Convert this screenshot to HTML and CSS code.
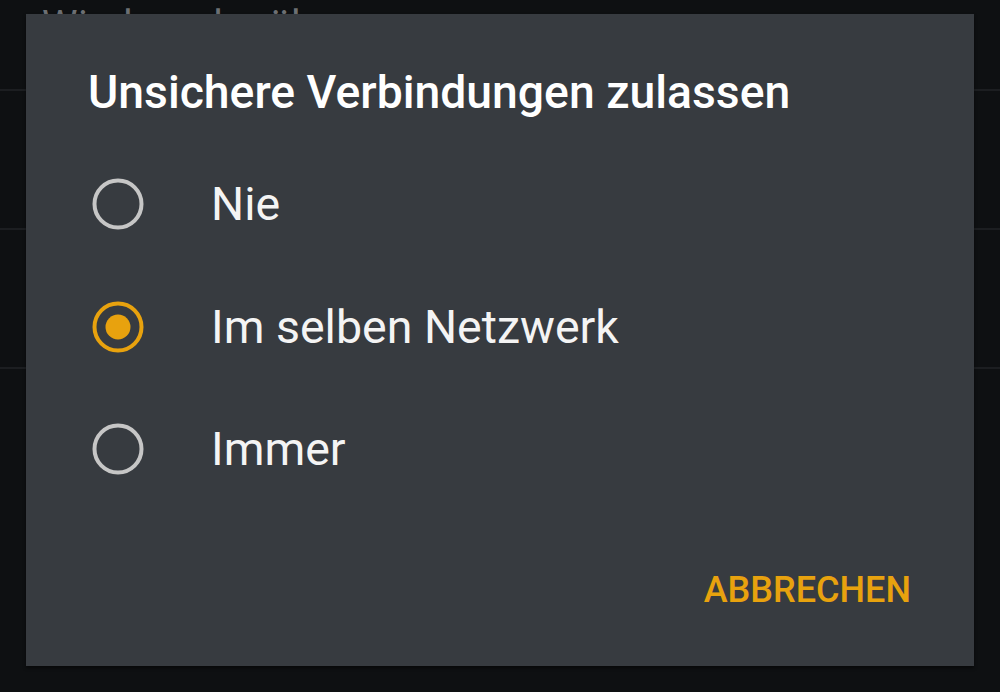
FILE: index.html
```html
<!DOCTYPE html>
<html lang="de">
<head>
<meta charset="utf-8">
<title>Unsichere Verbindungen zulassen</title>
<link rel="stylesheet" href="styles.css">
</head>
<body>
<div class="screen">
  <div class="bg-list">
    <div class="bg-row bg-row-first"><span class="bg-text">Wiedergabe über</span></div>
    <div class="bg-row"></div>
    <div class="bg-row"></div>
    <div class="bg-row bg-row-last"></div>
  </div>

  <div class="dialog" role="dialog">
    <h1 class="dialog-title">Unsichere Verbindungen zulassen</h1>
    <div class="options">
      <div class="option">
        <svg class="radio" viewBox="0 0 52 52" width="52" height="52"><circle cx="26" cy="26" r="23.5" fill="none" stroke="#c6c6c6" stroke-width="4"/></svg>
        <span class="option-label">Nie</span>
      </div>
      <div class="option">
        <svg class="radio" viewBox="0 0 52 52" width="52" height="52"><circle cx="26" cy="26" r="23.5" fill="none" stroke="#e8a20e" stroke-width="4"/><circle cx="26" cy="26" r="12.5" fill="#e8a20e"/></svg>
        <span class="option-label">Im selben Netzwerk</span>
      </div>
      <div class="option">
        <svg class="radio" viewBox="0 0 52 52" width="52" height="52"><circle cx="26" cy="26" r="23.5" fill="none" stroke="#c6c6c6" stroke-width="4"/></svg>
        <span class="option-label">Immer</span>
      </div>
    </div>
    <div class="actions">
      <button class="btn-text">ABBRECHEN</button>
    </div>
  </div>
</div>
</body>
</html>
```

FILE: styles.css
```css
* { box-sizing: border-box; }

html, body {
  margin: 0;
  padding: 0;
  background: #0e1012;
  font-family: Roboto, "Noto Sans", "Liberation Sans", sans-serif;
}

.screen {
  position: relative;
  width: 1000px;
  height: 692px;
  overflow: hidden;
  background: #0e1012;
}

.bg-list {
  display: flex;
  flex-direction: column;
}

.bg-row {
  height: 139px;
  border-bottom: 2px solid #1c1e21;
}

.bg-row-first {
  height: 91px;
  padding: 2px 0 0 42px;
}

.bg-row-last {
  border-bottom: none;
}

.bg-text {
  color: #6d7074;
  font-size: 40px;
  line-height: 48px;
  letter-spacing: 0.5px;
}

.dialog {
  position: absolute;
  left: 26px;
  top: 14px;
  width: 948px;
  height: 652px;
  background: #373b40;
  box-shadow: 0 2px 3px rgba(0,0,0,0.5);
  padding: 51px 63px 0 62px;
  display: flex;
  flex-direction: column;
}

.dialog-title {
  margin: 0;
  color: #ffffff;
  font-size: 46.3px;
  line-height: 54px;
  font-weight: 500;
}

.options {
  margin-top: 24px;
  display: flex;
  flex-direction: column;
}

.option {
  height: 122.5px;
  display: flex;
  align-items: center;
  padding-left: 4px;
  gap: 67px;
}

.radio {
  flex: none;
  display: block;
}

.option-label {
  color: #f4f4f4;
  font-size: 46.5px;
  line-height: 54px;
}

.actions {
  margin-top: auto;
  padding-bottom: 55px;
  display: flex;
  justify-content: flex-end;
}

.btn-text {
  background: none;
  border: none;
  padding: 0;
  color: #e8a20e;
  font-family: inherit;
  font-size: 36px;
  font-weight: 500;
  line-height: 42px;
}
```
